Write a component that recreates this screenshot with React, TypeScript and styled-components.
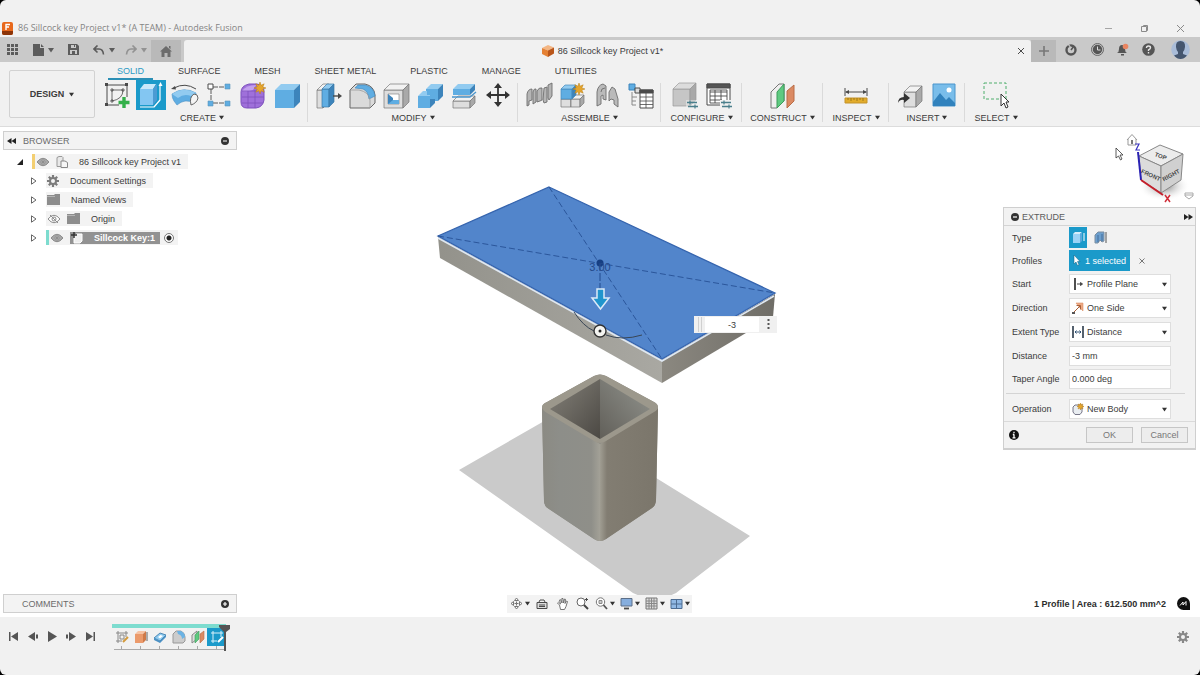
import React from 'react';
import styled, { createGlobalStyle, css } from 'styled-components';

const GlobalStyle = createGlobalStyle`
  *, *::before, *::after { box-sizing: border-box; }
  html, body { margin: 0; background: #000; }
  body { font: 9px/12px "Liberation Sans", Arial, sans-serif; color: #3c3c3c; }
  button, input, select { font: inherit; color: inherit; margin: 0; }
  button { border: 0; padding: 0; background: none; display: inline-flex; align-items: center; justify-content: center; }
  svg { display: block; flex: none; }
  h1, h2, ul { margin: 0; padding: 0; font: inherit; list-style: none; }
`;

const INK = '#4a4a4a';
const BLUE = '#5fade2';
const BLUE_DARK = '#3d84bb';
const BLUE_LIGHT = '#92cbf0';
const ACCENT = '#1b9aca';

/* ---------- frame ---------- */

const Window = styled.div`
  display: flex;
  flex-direction: column;
  min-height: 100vh;
  background: #f1f1f1;
  border-radius: 6px;
  overflow: hidden;
`;

const TitleBar = styled.header`
  display: flex;
  align-items: flex-end;
  justify-content: space-between;
  height: 37px;
  padding: 0 2px 2px 2px;
`;

const AppTitle = styled.h1`
  display: flex;
  align-items: center;
  gap: 5px;
  height: 14px;
  color: #858585;
  font-family: "Open Sans", sans-serif;
  font-size: 9px;
  white-space: nowrap;
`;

const WindowControls = styled.div`
  display: flex;
`;

const WindowButton = styled.button`
  width: 36px;
  height: 14px;
`;

const TabBar = styled.div`
  display: flex;
  height: 25px;
  background: #c9c9c9;
`;

const BarButton = styled.button<{ $w: number; $dark?: boolean; $muted?: boolean }>`
  width: ${p => p.$w}px;
  gap: 4px;
  opacity: ${p => (p.$muted ? 0.5 : 1)};
  ${p => p.$dark && css`
    margin-top: 3px;
    background: #b9b9b9;
  `}
`;

const QuickAccess = styled.div`
  display: flex;
  padding-right: 3px;
`;

const DocumentTab = styled.div`
  display: flex;
  flex: 1;
  align-items: center;
  margin-top: 3px;
  padding-left: 10px;
  background: #f1f1f1;
  border-radius: 3px 3px 0 0;
`;

const DocumentTitle = styled.span`
  display: flex;
  flex: 1;
  align-items: center;
  justify-content: center;
  gap: 4px;
  white-space: nowrap;
`;

const AccountTools = styled.div`
  display: flex;
`;

/* ---------- ribbon ---------- */

const Ribbon = styled.div`
  display: flex;
  height: 65px;
  border-bottom: 1px solid #dcdcdc;
`;

const DesignButton = styled.button`
  width: 86px;
  height: 48px;
  margin: 8px 1px 0 9px;
  gap: 5px;
  border: 1px solid #d2d2d2;
  border-radius: 2px;
  font-weight: bold;
`;

const RibbonBody = styled.div`
  flex: 1;
  min-width: 0;
`;

const RibbonTabs = styled.nav`
  display: flex;
  gap: 16px;
  height: 18px;
  padding-left: 12px;
`;

const RibbonTab = styled.button<{ $active?: boolean }>`
  padding: 1px 9px 0;
  border-bottom: 2px solid ${p => (p.$active ? '#2b8fb5' : 'transparent')};
  color: ${p => (p.$active ? '#2b9ac4' : 'inherit')};
  white-space: nowrap;
`;

const Groups = styled.div`
  display: flex;
`;

const Group = styled.section<{ $w: number; $last?: boolean }>`
  position: relative;
  display: flex;
  flex-direction: column;
  align-items: center;
  width: ${p => p.$w}px;
  ${p => !p.$last && css`
    &::after {
      content: '';
      position: absolute;
      top: 3px;
      right: 0;
      width: 1px;
      height: 39px;
      background: #dadada;
    }
  `}
`;

const ToolRow = styled.div`
  display: flex;
`;

const Tool = styled.button<{ $active?: boolean }>`
  width: 30px;
  height: 30px;
  margin: 0 2px;
  background: ${p => (p.$active ? ACCENT : 'none')};
`;

const GroupLabel = styled.button`
  height: 15px;
  gap: 3px;
  white-space: nowrap;
`;

/* ---------- canvas ---------- */

const Canvas = styled.main`
  position: relative;
  display: flex;
  flex: 1;
  flex-direction: column;
  justify-content: space-between;
  min-height: 490px;
  padding: 4px 4px 4px 3px;
  background: #fff;
`;

const Scene = styled.svg`
  position: absolute;
  inset: 0;
  width: 100%;
  height: 100%;
`;

const DockRow = styled.div`
  position: relative;
  display: flex;
  justify-content: space-between;
  align-items: flex-start;
`;

const FootRow = styled.div`
  position: relative;
  display: grid;
  grid-template-columns: 1fr auto 1fr;
  align-items: center;
`;

const Panel = styled.section`
  width: 234px;
`;

const PanelHeader = styled.div`
  display: flex;
  align-items: center;
  width: 234px;
  height: 19px;
  padding: 0 7px 0 3px;
  background: #f3f3f3;
  border: 1px solid #cfcfcf;
  color: #6b6b6b;
`;

const PanelTitle = styled.h2<{ $indent?: boolean }>`
  flex: 1;
  padding-left: ${p => (p.$indent ? 15 : 7)}px;
`;

const Tree = styled.ul`
  padding-top: 2px;
`;

const TreeItem = styled.li<{ $level: number }>`
  display: flex;
  align-items: center;
  height: 19px;
  gap: 5px;
  padding-left: ${p => 10 + p.$level * 14}px;
`;

const TreeToggle = styled.button`
  width: 14px;
  height: 14px;
`;

const Chip = styled.div<{ $mark?: string }>`
  display: flex;
  align-items: center;
  height: 15px;
  padding: 0 7px 0 1px;
  gap: 6px;
  background: #f3f3f3;
  white-space: nowrap;
  ${p => p.$mark && css`border-left: 3px solid ${p.$mark};`}
`;

const NodeName = styled.span<{ $selected?: boolean }>`
  display: flex;
  align-items: center;
  gap: 11px;
  ${p => p.$selected && css`
    height: 12px;
    padding: 0 5px 0 1px;
    background: #929292;
    color: #fff;
    font-weight: bold;
  `}
`;

const ActiveRadio = styled.input`
  appearance: none;
  width: 10px;
  height: 10px;
  margin: 0 -3px 0 -2px;
  border: 1px solid #777;
  border-radius: 50%;
  background: radial-gradient(circle, #222 0 2px, #fff 3px);
`;

const RightDock = styled.div`
  display: flex;
  flex-direction: column;
  align-items: flex-end;
  width: 193px;
`;

const Dialog = styled.form`
  width: 100%;
  background: #f2f2f2;
  border: 1px solid #cfcfcf;
  border-bottom-width: 2px;
`;

const DialogHeader = styled.div`
  display: flex;
  align-items: center;
  height: 18px;
  gap: 3px;
  padding: 0 2px 0 7px;
  border-bottom: 1px solid #d4d4d4;
  color: #5c5c5c;
  h2 { flex: 1; }
`;

const Fields = styled.div`
  padding: 0 24px 0 8px;
`;

const Field = styled.div<{ $tall?: boolean }>`
  display: flex;
  align-items: center;
  height: ${p => (p.$tall ? 24 : 23)}px;
  > label, > span { width: 57px; white-space: nowrap; }
`;

const Box = styled.div`
  display: flex;
  flex: 1;
  align-items: center;
  min-width: 0;
  height: 20px;
  gap: 3px;
  padding: 0 3px 0 2px;
  background: #fff;
  border: 1px solid #dedede;
`;

const Picker = styled.select`
  flex: 1;
  min-width: 0;
  padding: 0;
  border: 0;
  background: none;
  appearance: none;
`;

const TextBox = styled.input`
  flex: 1;
  min-width: 0;
  height: 20px;
  padding: 0 2px;
  background: #fff;
  border: 1px solid #dedede;
`;

const TypeButton = styled.button<{ $active?: boolean }>`
  width: 18px;
  height: 21px;
  margin-right: 4px;
  background: ${p => (p.$active ? ACCENT : 'none')};
`;

const SelectionButton = styled.button`
  width: 61px;
  height: 21px;
  gap: 4px;
  background: ${ACCENT};
  color: #fff;
  white-space: nowrap;
`;

const ClearButton = styled.button`
  width: 24px;
  height: 20px;
`;

const Divider = styled.hr`
  height: 1px;
  margin: 3px 10px 3px 2px;
  border: 0;
  background: #d4d4d4;
`;

const DialogFooter = styled.div`
  display: flex;
  align-items: center;
  height: 27px;
  gap: 8px;
  padding: 0 7px 0 5px;
  border-top: 1px solid #dadada;
`;

const InfoButton = styled.button`
  width: 10px;
  height: 16px;
  margin-right: auto;
`;

const DialogButton = styled.button`
  width: 47px;
  height: 16px;
  background: #ededed;
  border: 1px solid #c6c6c6;
  color: #777;
`;

const NavBar = styled.div`
  display: flex;
  align-items: center;
  height: 18px;
  background: #f3f3f3;
`;

const NavButton = styled.button<{ $menu?: boolean }>`
  width: ${p => (p.$menu ? 25 : 20)}px;
  height: 18px;
  gap: 2px;
`;

const Status = styled.div`
  display: flex;
  align-items: center;
  justify-content: flex-end;
  gap: 11px;
  padding-right: 6px;
  color: #2c2c2c;
  font-weight: bold;
`;

const FloatingInput = styled.div`
  position: absolute;
  left: calc(50% + 94px);
  top: 50%;
  display: flex;
  align-items: center;
  width: 83px;
  height: 17px;
  margin-top: -56px;
  padding: 1px 1px 1px 3px;
  gap: 1px;
  background: #f0f0f0;
  input {
    width: 54px;
    height: 15px;
    padding: 0;
    border: 0;
    background: #fff;
    text-align: center;
  }
`;

const MoreButton = styled.button`
  width: 16px;
  height: 15px;
`;

/* ---------- timeline ---------- */

const BottomBar = styled.footer`
  display: flex;
  align-items: flex-start;
  height: 58px;
  padding: 7px 8px 0 4px;
`;

const Playback = styled.div`
  display: flex;
  margin-right: 13px;
  padding-top: 3px;
`;

const PlayButton = styled.button`
  width: 19px;
  height: 19px;
`;

const Timeline = styled.div`
  position: relative;
  display: flex;
  height: 26px;
  border-top: 4px solid #7ddccf;
`;

const Feature = styled.button<{ $active?: boolean }>`
  width: 19px;
  height: 18px;
  background: ${p => (p.$active ? ACCENT : 'none')};
`;

const Ruler = styled.svg`
  position: absolute;
  left: 2px;
  bottom: 0;
`;

const Marker = styled.svg`
  position: absolute;
  right: -4px;
  top: -3px;
`;

const SettingsButton = styled.button`
  width: 18px;
  height: 26px;
  margin-left: auto;
`;

/* ---------- drawing helpers ---------- */

const Caret = ({ s = 5, c = '#333' }: { s?: number; c?: string }) => (
  <svg width={s} height={s} viewBox="0 0 6 6"><path d="M0 1h6L3 5.500z" fill={c} /></svg>
);

const Svg = ({ s = 30, h, children }: { s?: number; h?: number; children: React.ReactNode }) => (
  <svg width={s} height={h ?? s} viewBox={`0 0 ${s} ${h ?? s}`} fill="none" stroke={INK} strokeWidth="1" strokeLinejoin="round">{children}</svg>
);

type CubeProps = { x: number; y: number; w: number; h: number; d: number; front?: string; top?: string; side?: string; line?: string };
const Cube = ({ x, y, w, h, d, front = BLUE, top = BLUE_LIGHT, side = BLUE_DARK, line = 'none' }: CubeProps) => (
  <g stroke={line} strokeWidth=".7">
    <path fill={front} d={`M${x} ${y + d}h${w}v${h}h${-w}z`} />
    <path fill={top} d={`M${x} ${y + d}l${d} ${-d}h${w}l${-d} ${d}z`} />
    <path fill={side} d={`M${x + w} ${y + d}l${d} ${-d}v${h}l${-d} ${d}z`} />
  </g>
);
const GREY = { front: '#dedede', top: '#f2f2f2', side: '#a9a9a9', line: '#777' };

const burst = (cx: number, cy: number, r: number) =>
  Array.from({ length: 16 }, (_, i) => {
    const a = (i * Math.PI) / 8;
    const k = i % 2 ? r * 0.5 : r;
    return `${(cx + k * Math.sin(a)).toFixed(1)},${(cy - k * Math.cos(a)).toFixed(1)}`;
  }).join(' ');
const Burst = ({ x, y, r = 6 }: { x: number; y: number; r?: number }) => (
  <polygon points={burst(x, y, r)} fill="#e5a52c" stroke="#b97e15" strokeWidth=".5" />
);

const Gear = ({ s = 12, c = '#777' }: { s?: number; c?: string }) => (
  <svg width={s} height={s} viewBox="0 0 12 12">
    <g stroke={c} strokeWidth="2.200">
      <path d="M6 0v12M0 6h12M1.800 1.800l8.400 8.400M10.200 1.800l-8.400 8.400" />
    </g>
    <circle cx="6" cy="6" r="4" fill={c} />
    <circle cx="6" cy="6" r="2" fill="#f3f3f3" />
  </svg>
);

const Sync = () => (
  <g stroke="#4a7f8c" strokeWidth="1.500">
    <path d="M17 22.500h10M18 26.500h10" />
    <path d="M20 20.500v4M25 24.500v4" strokeWidth="1.200" />
  </g>
);

/* ---------- ribbon icons ---------- */

const icons: Record<string, React.ReactNode> = {
  sketch: <>
    <path d="M5 5h20M5 5v20M25 5v12M5 25h12" />
    <g fill={INK} stroke="none"><path d="M3 3h3v3H3zM23 3h3v3h-3zM3 23h3v3H3z" /></g>
    <path d="M10 10h11q0 9-11 11zM9 9h2v2H9zM20 9h2v2h-2zM9 20h2v2H9z" strokeWidth=".8" />
    <path d="M22 17v11M16.500 22.500h11" stroke="#34b04a" strokeWidth="3.400" />
  </>,
  extrude: <>
    <path d="M4 9l4-5h12l-3 5z" fill="#c9e8fa" stroke="none" />
    <path d="M4 9h13v16H4z" fill="#83c6f2" stroke="none" />
    <path d="M17 9l4-5v16l-4 5z" fill="#4c9bd3" stroke="none" />
    <path d="M4 27h14l6-7V6" stroke="#fff" strokeWidth="1.200" /><path d="M24.500 2l2 4h-4z" fill="#fff" stroke="none" />
  </>,
  revolve: <>
    <path d="M4 8Q15 2 26 9" /><path d="M1 9l4-3 1 3.500z" fill={INK} stroke="none" />
    <path d="M2 14Q14 6 26 13l-2 10q-9-5-17 2l-3-4q-2-3-2-7z" fill={BLUE} stroke="#4a90c4" strokeWidth=".6" />
    <path d="M2 14Q14 6 26 13l-5 3q-7-3-13 2z" fill={BLUE_LIGHT} stroke="none" />
    <path d="M21 25q-2-8 3-11 4 0 4 4-1 5-7 7z" fill="#f4f4f4" stroke="#666" />
  </>,
  pattern: <>
    <path d="M7 9v12M9 7h11M9 23h11" strokeDasharray="5 1" strokeWidth=".9" />
    <path d="M4 4h5v5H4z" fill="#fff" />
    <g fill={BLUE} stroke="#5b93b8" strokeWidth=".6"><path d="M21 4h5v5h-5zM4 21h5v5H4zM21 21h5v5h-5z" /></g>
  </>,
  form: <>
    <path d="M3 12q0-6 8-8h8q7 1 7 7v9q-1 7-8 8H9q-6 0-6-6z" fill="#9f70da" stroke="#7d51bd" />
    <path d="M4 11q4-6 14-6l-3 5q-5 2-11 1z" fill="#c3a0ee" stroke="none" />
    <path d="M4 17h22M10 11v17M17 10v18M4 23h21M4 11h14l7-4" stroke="#7d51bd" strokeWidth=".8" />
    <Burst x={22} y={8} r={6} />
  </>,
  box: <Cube x={3} y={4} w={19} h={18} d={6} />,
  press: <>
    <Cube x={4} y={4} w={6} h={18} d={6} {...GREY} />
    <Cube x={9} y={4} w={7} h={18} d={5} line="#3a78a8" />
    <path d="M20 16h6" strokeWidth="1.400" /><path d="M25 13l4 3-4 3z" fill={INK} stroke="none" />
  </>,
  fillet: <>
    <path d="M3 10l6-6h9q9 2 10 11v8l-5 5H3z" fill="#dadada" stroke="#666" />
    <path d="M11 5h7q9 2 10 11l-6 3q-1-8-6-10l-8-1z" fill={BLUE} stroke={BLUE_DARK} strokeWidth=".6" />
    <path d="M3 10h9q10 2 11 10v8" stroke="#999" strokeWidth=".8" />
  </>,
  shell: <>
    <Cube x={3} y={4} w={19} h={18} d={6} {...GREY} />
    <path d="M7 14h11v10H7z" fill="#fff" stroke="#777" strokeWidth=".6" />
    <path d="M7 14l5 4v6H7z" fill={BLUE_DARK} stroke="none" /><path d="M7 24l5-4h6v4z" fill={BLUE} stroke="none" />
  </>,
  combine: <>
    <Cube x={11} y={4} w={12} h={12} d={5} />
    <Cube x={3} y={11} w={12} h={12} d={5} />
    <path d="M12 10h10v9h-7v-4h-3z" fill={BLUE} stroke="none" />
  </>,
  split: <>
    <Cube x={4} y={4} w={17} h={6} d={5} />
    <Cube x={4} y={16} w={17} h={7} d={5} {...GREY} />
    <path d="M3 17h18l6-5" stroke="#4a95cc" strokeWidth="1.400" />
  </>,
  move: <g stroke="#333" strokeWidth="1.800">
    <path d="M15 6v18M6 15h18" />
    <path d="M15 3l4 5h-8zM15 27l-4-5h8zM3 15l5-4v8zM27 15l-5 4v-8z" fill="#333" stroke="none" />
  </g>,
  joint: <g fill="#b5b5b5" stroke="#6d6d6d" strokeWidth=".9">
    <path d="M3 26V14q1-5 5-5v11l-3 1v4zM9 24V12q1-4 3-3v13zM13 22V11q2-4 5-3v12l-2 1zM19 20l1-12 3-1v15l-3 1zM24 18V5l4-2v13l-3 4z" />
  </g>,
  newComponent: <>
    <Cube x={3} y={15} w={10} h={8} d={4} {...GREY} />
    <Cube x={13} y={15} w={9} h={8} d={4} {...GREY} />
    <Cube x={3} y={5} w={11} h={10} d={4} line="#4689bb" />
    <Burst x={21} y={9} r={6} />
  </>,
  asBuilt: <g fill="#bababa" stroke="#6d6d6d" strokeWidth=".9">
    <path d="M5 26V12q1-7 6-8l3 2v14l-3-1v-4l-2 1v8z" /><path d="M17 12l3-5 3 2 3 10v8l-4-3v-4l-3-1-2 2z" />
    <path d="M9 12q0-4 4-4" fill="none" />
  </g>,
  bom: <>
    <path d="M3 4h6v6H3z" fill={BLUE} stroke={BLUE_DARK} /><path d="M9 8h5v5H9z" fill="#ddd" />
    <path d="M6 12v13h4M6 17h5M6 21h4" stroke="#888" />
    <path d="M14 10h13v18H14z" fill="#fff" /><path d="M14 10h13v3H14z" fill={INK} />
    <path d="M14 17h13M14 21h13M14 24.500h13M20 13v15" strokeWidth=".8" />
  </>,
  configure: <>
    <Cube x={3} y={3} w={17} h={17} d={6} front="#c6c6c6" top="#dcdcdc" side="#a8a8a8" line="#9a9a9a" />
    <path d="M16 20h13v9H16z" fill="#f1f1f1" stroke="none" opacity=".5" /><Sync />
  </>,
  table: <>
    <path d="M3 4h23v21H3z" fill="#fff" /><path d="M3 4h23v4H3z" fill="#555" />
    <path d="M6 12h17M6 16h17M6 20h12M11 10v13M17 10v13M6 10h17v10M6 10v13h11" strokeWidth=".9" />
    <path d="M16 20h12v8H16z" fill="#f1f1f1" stroke="none" /><Sync />
  </>,
  plane: <>
    <path d="M3 12l8-8h5v17l-7 7H3z" fill="#efefef" stroke="#777" /><path d="M9 12l7-8v17l-7 7z" fill="#5fca81" stroke="#3d9b5a" />
    <path d="M19 11l7-6v16l-7 7z" fill="#db8a63" stroke="#b96d47" />
  </>,
  measure: <>
    <path d="M4 8v8M26 8v8M5 12h20" /><path d="M4 12l4-2v4zM26 12l-4-2v4z" fill={INK} stroke="none" />
    <path d="M4 18h22v5H4z" fill="#e2ac2b" stroke="#c4932a" /><path d="M7 18v2M10 18v3M13 18v2M16 18v3M19 18v2M22 18v3" stroke="#8f6c18" strokeWidth=".8" />
  </>,
  insert: <>
    <Cube x={9} y={6} w={12} h={15} d={6} {...GREY} />
    <path d="M3 23q0-6 6-6v-4l6 5-6 5v-3q-4-1-6 3z" fill="#333" stroke="none" />
  </>,
  image: <>
    <path d="M4 4h22v22H4z" fill="#79bdea" stroke="#4a95cc" />
    <path d="M4 22l7-9 6 7 3-3 6 6v3H4z" fill="#3182bd" stroke="none" /><circle cx="20" cy="10" r="2.500" fill="#fff" stroke="none" />
  </>,
  select: <>
    <path d="M3 3h22v16H3z" stroke="#4fae6c" strokeDasharray="3 2" />
    <path d="M20 14v12l3-3 2 5 2-1-2-5h3z" fill="#fff" stroke="#333" />
  </>,
};

const groups = [
  { name: 'CREATE', w: 212, tools: ['sketch', 'extrude', 'revolve', 'pattern', 'form', 'box'] },
  { name: 'MODIFY', w: 210, tools: ['press', 'fillet', 'shell', 'combine', 'split', 'move'] },
  { name: 'ASSEMBLE', w: 143, tools: ['joint', 'newComponent', 'asBuilt', 'bom'] },
  { name: 'CONFIGURE', w: 81, tools: ['configure', 'table'] },
  { name: 'CONSTRUCT', w: 81, tools: ['plane'] },
  { name: 'INSPECT', w: 66, tools: ['measure'] },
  { name: 'INSERT', w: 76, tools: ['insert', 'image'] },
  { name: 'SELECT', w: 62, tools: ['select'] },
];

const tabs = ['SOLID', 'SURFACE', 'MESH', 'SHEET METAL', 'PLASTIC', 'MANAGE', 'UTILITIES'];

/* ---------- small icons ---------- */

const Eye = ({ off }: { off?: boolean }) => (
  <svg width="14" height="10" viewBox="0 0 14 10" fill="none" stroke="#8c8c8c">
    <path d="M1 5q6-7.500 12 0-6 7.500-12 0z" fill={off ? '#fff' : '#a8a8a8'} /><circle cx="7" cy="5" r="2" fill={off ? 'none' : '#fff'} />
    {off ? <path d="M3 1l8 8" /> : <circle cx="7" cy="5" r="1" fill="#777" />}
  </svg>
);

const Folder = () => (
  <svg width="13" height="11" viewBox="0 0 13 11"><path d="M0 1h7l1-1h5v11H0z" fill="#8d8d8d" /><path d="M0 2.500h8" stroke="#b5b5b5" /></svg>
);

const RoundIcon = ({ plus }: { plus?: boolean }) => (
  <svg width="8" height="8" viewBox="0 0 8 8"><circle cx="4" cy="4" r="4" fill="#333" /><path d={plus ? 'M2 4h4M4 2v4' : 'M2 4h4'} stroke="#fff" strokeWidth="1.200" /></svg>
);

const Rewind = ({ flip }: { flip?: boolean }) => (
  <svg width="9" height="6" viewBox="0 0 9 6"><path d={flip ? 'M0 0l4.500 3L0 6zM4.500 0L9 3 4.500 6z' : 'M9 0L4.500 3 9 6zM4.500 0L0 3l4.500 3z'} fill="#222" /></svg>
);

const Pointer = () => (
  <svg width="8" height="11" viewBox="0 0 8 11"><path d="M1 0v9l2-2 1.500 3.500 1.500-.7L4.500 6.500H7z" fill="#fff" stroke="#0f5f80" strokeWidth=".5" /></svg>
);

const Expand = () => (
  <svg width="6" height="8" viewBox="0 0 6 8"><path d="M.5 .8L5 4 .5 7.200z" fill="#fff" stroke="#666" /></svg>
);

/* ---------- sections ---------- */

const Header = () => (
  <>
    <TitleBar>
      <AppTitle>
        <svg width="11" height="13" viewBox="0 0 11 13">
          <rect width="11" height="13" rx="2" fill="#e8681c" /><path d="M0 9h11v2q0 2-2 2H2q-2 0-2-2z" fill="#8c3408" />
          <path d="M4 8V2.500h4M4 5h3" stroke="#fff" strokeWidth="1.400" fill="none" />
        </svg>
        86 Sillcock key Project v1* (A TEAM) - Autodesk Fusion
      </AppTitle>
      <WindowControls>
        <WindowButton aria-label="Minimize"><Svg s={9}><path d="M1 4.500h7" stroke="#a5a5a5" /></Svg></WindowButton>
        <WindowButton aria-label="Restore"><Svg s={9}><path d="M1.500 2.500h5v5h-5zM3.500 2.500v-1h4v5h-1" stroke="#8a8a8a" /></Svg></WindowButton>
        <WindowButton aria-label="Close"><Svg s={9}><path d="M1 1l7 7M8 1L1 8" stroke="#8a8a8a" /></Svg></WindowButton>
      </WindowControls>
    </TitleBar>
    <TabBar>
      <QuickAccess>
        <BarButton $w={25} aria-label="Data panel">
          <svg width="11" height="11" viewBox="0 0 11 11" fill="#5c5c5c"><path d="M0 0h3v3H0zM4 0h3v3H4zM8 0h3v3H8zM0 4h3v3H0zM4 4h3v3H4zM8 4h3v3H8zM0 8h3v3H0zM4 8h3v3H4zM8 8h3v3H8z" /></svg>
        </BarButton>
        <BarButton $w={36} aria-label="File">
          <svg width="11" height="12" viewBox="0 0 11 12" fill="#5c5c5c"><path d="M0 0h7v4h4v8H0zM8 0l3 3H8z" /></svg><Caret s={6} c="#5c5c5c" />
        </BarButton>
        <BarButton $w={25} aria-label="Save">
          <svg width="11" height="11" viewBox="0 0 11 11"><path d="M0 0h9l2 2v9H0z" fill="#5c5c5c" /><path d="M3 1h5v3H3zM2 6h7v4H2z" fill="#c9c9c9" /><path d="M6 1h1v2H6zM4 7h3v3H4z" fill="#5c5c5c" /></svg>
        </BarButton>
        <BarButton $w={35} aria-label="Undo">
          <svg width="12" height="10" viewBox="0 0 12 10" fill="none" stroke="#5c5c5c" strokeWidth="1.600"><path d="M4.500 .5L1 4l3.500 3.500M1 4h5q4 0 4.500 5.500" /></svg><Caret s={6} c="#5c5c5c" />
        </BarButton>
        <BarButton $w={30} $muted aria-label="Redo">
          <svg width="12" height="10" viewBox="0 0 12 10" fill="none" stroke="#5c5c5c" strokeWidth="1.600"><path d="M7.500 .5L11 4 7.500 7.500M11 4H6Q2 4 1.500 9.500" /></svg><Caret s={6} c="#5c5c5c" />
        </BarButton>
        <BarButton $w={30} $dark aria-label="Home">
          <svg width="12" height="11" viewBox="0 0 12 11" fill="#6c6c6c"><path d="M6 0l6 5.500h-1.500V11H7.500V7h-3v4h-3V5.500H0zM9 0h1.500v3L9 2z" /></svg>
        </BarButton>
      </QuickAccess>
      <DocumentTab>
        <DocumentTitle>
          <svg width="12" height="12" viewBox="0 0 12 12"><path d="M0 3l6-3 6 2.500-6 3z" fill="#f3b684" /><path d="M0 3l6 2.500V12L0 9z" fill="#e58134" /><path d="M12 2.500L6 5.500V12l6-3.500z" fill="#b9561a" /></svg>
          86 Sillcock key Project v1*
        </DocumentTitle>
        <BarButton $w={20} aria-label="Close document"><Svg s={8}><path d="M1 1l6 6M7 1L1 7" /></Svg></BarButton>
      </DocumentTab>
      <AccountTools>
        <BarButton $w={25} $dark aria-label="New design"><Svg s={10}><path d="M5 0v10M0 5h10" stroke="#777" strokeWidth="1.600" /></Svg></BarButton>
        <BarButton $w={30} aria-label="Extensions"><Svg s={12}><circle cx="6" cy="6" r="4.500" stroke="#555" strokeWidth="2.400" /><path d="M6 6l3-4" stroke="#555" strokeWidth="1.600" /><path d="M3 0l3 4" stroke="#c9c9c9" strokeWidth="1.200" /></Svg></BarButton>
        <BarButton $w={22} aria-label="Job status"><Svg s={13}><circle cx="6.500" cy="6.500" r="6" stroke="#666" /><circle cx="6.500" cy="6.500" r="4.700" fill="#555" stroke="none" /><path d="M6.500 3.500v3.500h3" stroke="#ddd" /></Svg></BarButton>
        <BarButton $w={29} aria-label="Notifications"><Svg s={13}><path d="M1 10q2-1 2-4 0-4 3-4t3 4q0 3 2 4zM5 11h3v1.500H5z" fill="#555" stroke="none" /><circle cx="9.500" cy="3.500" r="2.800" fill="#e98561" stroke="none" /></Svg></BarButton>
        <BarButton $w={23} aria-label="Help"><Svg s={13}><circle cx="6.500" cy="6.500" r="6.300" fill="#555" stroke="none" /><path d="M4.500 5q0-2 2-2t2 1.700q0 1.300-2 2.200v1M6.500 9v1.500" stroke="#e6e6e6" strokeWidth="1.400" /></Svg></BarButton>
        <BarButton $w={40} aria-label="Account">
          <svg width="19" height="19" viewBox="0 0 19 19"><circle cx="9.500" cy="9.500" r="9.300" fill="#a9bcd8" /><path d="M9.500 1q5 0 4.500 6-.5 4-2 5v2l4 1.500q-3 3.500-6.500 3.500T3 15.500L7 14v-2Q5.500 11 5 7 4.500 1 9.500 1z" fill="#45566f" /></svg>
        </BarButton>
      </AccountTools>
    </TabBar>
  </>
);

const RibbonBar = () => (
  <Ribbon>
    <DesignButton>DESIGN <Caret /></DesignButton>
    <RibbonBody>
      <RibbonTabs>
        {tabs.map(t => <RibbonTab key={t} $active={t === 'SOLID'}>{t}</RibbonTab>)}
      </RibbonTabs>
      <Groups>
        {groups.map((g, i) => (
          <Group key={g.name} $w={g.w} $last={i === groups.length - 1}>
            <ToolRow>
              {g.tools.map(t => <Tool key={t} $active={t === 'extrude'} aria-label={t}><Svg>{icons[t]}</Svg></Tool>)}
            </ToolRow>
            <GroupLabel>{g.name} <Caret /></GroupLabel>
          </Group>
        ))}
      </Groups>
    </RibbonBody>
  </Ribbon>
);

const Model = () => (
  <Scene viewBox="0 127 1200 490" aria-label="Model view">
    <defs>
      <linearGradient id="left" x1="0" x2="1"><stop offset="0" stopColor="#8b8a83" /><stop offset=".3" stopColor="#8d8e89" /><stop offset=".85" stopColor="#8f8f89" /><stop offset="1" stopColor="#a3a197" /></linearGradient>
      <linearGradient id="right" x1="0" x2="1"><stop offset="0" stopColor="#a09d92" /><stop offset=".12" stopColor="#827d72" /><stop offset="1" stopColor="#7b766b" /></linearGradient>
      <linearGradient id="wallL" x1="0" x2="1" y1="0" y2="1"><stop offset="0" stopColor="#85827a" /><stop offset="1" stopColor="#4b4843" /></linearGradient>
      <linearGradient id="wallR" x1="0" x2="1" y1="1" y2="0"><stop offset="0" stopColor="#615f59" /><stop offset="1" stopColor="#93958f" /></linearGradient>
      <linearGradient id="slabL" x1="0" x2="1"><stop offset="0" stopColor="#93928b" /><stop offset="1" stopColor="#a9a8a2" /></linearGradient>
      <linearGradient id="slabR" x1="0" x2="1"><stop offset="0" stopColor="#8b8880" /><stop offset="1" stopColor="#6f6d67" /></linearGradient>
    </defs>
    <path d="M459 470L560 412 640 468 750 536 676 593Q655 604 633 593z" fill="#cacaca" />
    <path d="M542 408Q542 404 547 402L594 376Q600 373 606 376L654 402Q658 404 658 408L656 500Q656 505 652 508L606 539Q600 543 594 539L549 509Q544 506 544 501z" fill="#8d8b83" />
    <path d="M542 408L600 444V541Q597 541 594 539L549 509Q544 506 544 501z" fill="url(#left)" />
    <path d="M658 408L600 444V541Q603 541 606 539L652 508Q656 505 656 500z" fill="url(#right)" />
    <path d="M542 407Q542 404 547 402L594 376Q600 373 606 376L654 402Q658 404 658 407 658 410 654 412L606 441Q600 445 594 441L547 413Q542 410 542 407z" fill="#9c988c" />
    <path d="M600 379L550 409 600 439z" fill="url(#wallL)" /><path d="M600 379L650 409 600 439z" fill="url(#wallR)" />

    <path d="M438 237L662 360V383L440 258z" fill="url(#slabL)" /><path d="M775 294L662 360V383L773 317z" fill="url(#slabR)" />
    <path d="M438 238L662 361 774 296" fill="none" stroke="#dfe8f2" strokeWidth="1.600" />
    <path d="M549 187L775 293 662 359 438 236z" fill="#5285cb" stroke="#3564ae" strokeWidth="1.300" />
    <g stroke="#2b569b" strokeWidth="1" strokeDasharray="6 3"><path d="M438 236L775 293M549 187L662 359" /></g>
    <circle cx="600" cy="263" r="3.500" fill="#163f83" />
    <path d="M600 263v26" stroke="#214a8e" strokeDasharray="8 2" />
    <text x="600" y="271" textAnchor="middle" fontSize="11" fill="#24498a">3.00</text>
    <path d="M597 289h7v9h5l-8.500 11-8.500-11h5z" fill="#2095cd" stroke="#dceaf8" strokeWidth="1.500" />
    <path d="M574 312Q583 326 594 331M606 335Q622 341 642 335" fill="none" stroke="#394655" />
    <circle cx="600" cy="331" r="6" fill="#f4f4f1" stroke="#333" strokeWidth="1.400" /><circle cx="600" cy="331" r="1.500" fill="#222" />
  </Scene>
);

const Browser = () => (
  <Panel>
    <PanelHeader><Rewind /><PanelTitle>BROWSER</PanelTitle><RoundIcon /></PanelHeader>
    <Tree>
      <TreeItem $level={0}>
        <TreeToggle aria-label="Collapse"><svg width="6" height="6" viewBox="0 0 6 6"><path d="M6 0v6H0z" fill="#222" /></svg></TreeToggle>
        <Chip $mark="#f3cf72"><Eye />
          <NodeName>
            <Svg s={12}><path d="M1 1.500l2-1h3l1 1v9H1z" fill="#e8e8e8" stroke="#999" /><path d="M5 5h4l2.500 1.500v5H5z" fill="#f6f6f6" stroke="#888" /></Svg>
            86 Sillcock key Project v1
          </NodeName>
        </Chip>
      </TreeItem>
      <TreeItem $level={1}><TreeToggle aria-label="Expand"><Expand /></TreeToggle><Chip><NodeName><Gear c="#7c7c7c" />Document Settings</NodeName></Chip></TreeItem>
      <TreeItem $level={1}><TreeToggle aria-label="Expand"><Expand /></TreeToggle><Chip><NodeName><Folder />Named Views</NodeName></Chip></TreeItem>
      <TreeItem $level={1}><TreeToggle aria-label="Expand"><Expand /></TreeToggle><Chip><Eye off /><NodeName><Folder />Origin</NodeName></Chip></TreeItem>
      <TreeItem $level={1}>
        <TreeToggle aria-label="Expand"><Expand /></TreeToggle>
        <Chip $mark="#7ddccf"><Eye />
          <NodeName $selected>
            <Svg s={12}><path d="M3 4l2-2h6v7l-2 2H3z" fill="#eee" stroke="#fff" /><path d="M3 0v6M0 3h6" stroke="#333" strokeWidth="1.500" /></Svg>
            Sillcock Key:1
          </NodeName>
          <ActiveRadio type="radio" name="active" aria-label="Activate component" defaultChecked />
        </Chip>
      </TreeItem>
    </Tree>
  </Panel>
);

const ViewCube = () => (
  <svg width="86" height="76" viewBox="1110 131 86 76" fill="none">
    <defs>
      <radialGradient id="cubeShade"><stop offset="0" stopColor="#777" /><stop offset="1" stopColor="#fff" stopOpacity="0" /></radialGradient>
    </defs>
    <ellipse cx="1164" cy="186" rx="26" ry="15" fill="url(#cubeShade)" />
    <path d="M1127 140l5-5.500 5 5.500M1128 139v6h8v-6" stroke="#999" fill="#fff" /><path d="M1131 140h2v4h-2z" fill="#777" />
    <path d="M1139 156L1160 145 1183 154 1161 166z" fill="#ececec" stroke="#888" />
    <path d="M1139 156L1161 166V193L1141 180z" fill="#dcdcdc" stroke="#888" />
    <path d="M1183 154L1161 166V193L1181 180z" fill="#d0d0d0" stroke="#888" />
    <g fill="#444" fontSize="6" fontWeight="bold" textAnchor="middle">
      <text transform="translate(1160 158) rotate(20)">TOP</text>
      <text transform="translate(1150 177) rotate(24)">FRONT</text>
      <text transform="translate(1172 177) rotate(-28)">RIGHT</text>
    </g>
    <path d="M1138 152l3 28" stroke="#2a22b4" strokeWidth="2" /><path d="M1141 180l22 15" stroke="#c41f2b" strokeWidth="2" />
    <path d="M1135 144h4l-3 6h4" stroke="#3b34c4" strokeWidth="1.200" /><path d="M1165 195l5 7M1170 195l-5 7" stroke="#d02f3a" strokeWidth="1.500" />
    <path d="M1185 193h8v3l-4 3-4-3zM1185 195h8" stroke="#aaa" fill="#fff" />
    <path d="M1116 148v10l2.500-2 2 4 1.500-1-2-4h3z" fill="#fff" stroke="#333" strokeWidth=".8" />
  </svg>
);

const PickerField = ({ id, label, value, icon }: { id: string; label: string; value: string; icon: React.ReactNode }) => (
  <Field $tall>
    <label htmlFor={id}>{label}</label>
    <Box><Svg s={12}>{icon}</Svg><Picker id={id} defaultValue={value}><option>{value}</option></Picker><Caret /></Box>
  </Field>
);

const ExtrudeDialog = () => (
  <Dialog onSubmit={e => e.preventDefault()}>
    <DialogHeader><RoundIcon /><h2>EXTRUDE</h2><Rewind flip /></DialogHeader>
    <Fields>
      <Field>
        <span>Type</span>
        <TypeButton type="button" $active aria-label="Extrude"><Svg s={13}><Cube x={1} y={1} w={7} h={9} d={2} front="#9bd3f6" top="#d6eefb" side="#5aa9dc" /><path d="M12 2v8" stroke="#fff" /></Svg></TypeButton>
        <TypeButton type="button" aria-label="Thin extrude"><Svg s={13}><path d="M1 4l3-3h6v9l-2 1-2-2-2 3H1z" fill="#6c9fce" stroke="#7b8da0" /><path d="M4 4v7M8 3v7" stroke="#456f9c" /><path d="M12 1v11" stroke="#555" /></Svg></TypeButton>
      </Field>
      <Field>
        <span>Profiles</span>
        <SelectionButton type="button"><Pointer />1 selected</SelectionButton>
        <ClearButton type="button" aria-label="Clear selection"><Svg s={6}><path d="M.5 .5l5 5M5.500 .5l-5 5" stroke="#777" /></Svg></ClearButton>
      </Field>
      <PickerField id="start" label="Start" value="Profile Plane" icon={<><path d="M3 0v12" stroke="#222" strokeWidth="1.600" /><path d="M5 6h5" stroke="#444" /><path d="M8.500 4.500v3l2-1.500z" fill="#444" /></>} />
      <PickerField id="direction" label="Direction" value="One Side" icon={<><path d="M4 1l7 0v8L8 6z" fill="#eda983" stroke="#dc9068" strokeWidth=".6" /><path d="M1 11l7-7M4.500 3.500h4v4" stroke="#a85f38" /><path d="M0 10h3v2H0z" fill="#555" stroke="none" /></>} />
      <PickerField id="extent" label="Extent Type" value="Distance" icon={<><path d="M1 0v12M11 0v12" stroke="#2b3a4a" strokeWidth="1.600" /><path d="M3 6h6M4.500 4.500L3 6l1.500 1.500M7.500 4.500L9 6 7.500 7.500" stroke="#357" /></>} />
      <Field><label htmlFor="distance">Distance</label><TextBox id="distance" defaultValue="-3 mm" /></Field>
      <Field><label htmlFor="taper">Taper Angle</label><TextBox id="taper" defaultValue="0.000 deg" /></Field>
    </Fields>
    <Divider />
    <Fields>
      <PickerField id="operation" label="Operation" value="New Body" icon={<><path d="M1 4l2-2h7v7l-2 2.500H3L1 9z" fill="#e9edf1" stroke="#778" /><Burst x={8.500} y={3.500} r={3.500} /></>} />
    </Fields>
    <DialogFooter>
      <InfoButton type="button" aria-label="Info"><svg width="10" height="10" viewBox="0 0 10 10"><circle cx="5" cy="5" r="5" fill="#111" /><path d="M5 1.800v1.500M5 4.300v3.500M3.800 4.500H5M3.500 7.800h3" stroke="#fff" strokeWidth="1.300" /></svg></InfoButton>
      <DialogButton>OK</DialogButton>
      <DialogButton type="button">Cancel</DialogButton>
    </DialogFooter>
  </Dialog>
);

const Navigation = () => (
  <NavBar>
    <NavButton $menu aria-label="Orbit"><Svg s={13}><path d="M6.500 1l2 2.500h-4zM6.500 12l2-2.500h-4zM1 6.500L3.500 4.500v4zM12 6.500L9.500 4.500v4z" fill="#fff" stroke="#777" /><path d="M4.500 6.500h4M6.500 4.500v4" stroke="#777" /></Svg><Caret /></NavButton>
    <NavButton aria-label="Look at"><Svg s={12}><path d="M1 4.500h10v6H1z" fill="#ddd" /><path d="M3 4l1-2h4l1 2M3 7h6M3 8.500h6" /></Svg></NavButton>
    <NavButton aria-label="Pan"><Svg s={13}><path d="M3.500 8L1.500 6l1-.8L4.500 7l-1-4 1-.4L6 6l-.2-4.500h1.200L7.500 6l1-4 1 .3L9 6.500 10.500 4l1 .5-1.500 5-1.500 3h-4z" fill="#fff" stroke="#666" strokeWidth=".9" /></Svg></NavButton>
    <NavButton aria-label="Zoom"><Svg s={13}><circle cx="5" cy="5" r="4" fill="#fff" stroke="#666" /><path d="M8 8l4 4" stroke="#444" strokeWidth="2" /><path d="M10.500 1v3M9 2.500h3" /></Svg></NavButton>
    <NavButton $menu aria-label="Fit"><Svg s={13}><circle cx="5.500" cy="5" r="4.200" fill="#fff" stroke="#777" /><path d="M4 3.500h3v3H4z" fill="#ccc" stroke="#888" /><path d="M8.500 8l3.500 4" stroke="#555" strokeWidth="1.800" /></Svg><Caret /></NavButton>
    <NavButton $menu aria-label="Display settings"><Svg s={13}><path d="M1 1.500h11v7.500H1z" fill="#86aede" stroke="#5c6f88" /><path d="M4 11.500h5" strokeWidth="1.800" /></Svg><Caret /></NavButton>
    <NavButton $menu aria-label="Grid"><Svg s={13}><path d="M1 1h11v11H1z" fill="#ddd" stroke="#777" /><path d="M1 4h11M1 6.500h11M1 9h11M4 1v11M6.500 1v11M9 1v11" stroke="#888" /></Svg><Caret /></NavButton>
    <NavButton $menu aria-label="Viewports"><Svg s={13} h={12}><path d="M1 1.500h11v9H1z" fill="#90b8e4" stroke="#4d6c92" /><path d="M6.500 1.500v9M1 6h11" stroke="#4d6c92" /></Svg><Caret /></NavButton>
  </NavBar>
);

const playback: [string, string][] = [
  ['Go to start', 'M0 1h1.500v9H0zM9 1v9L2 5.500z'],
  ['Step back', 'M7 1v9L0 5.500zM8 3.500h2v4H8z'],
  ['Play', 'M1 0v11l9-5.500z'],
  ['Step forward', 'M3 1v9l7-4.500zM0 3.500h2v4H0z'],
  ['Go to end', 'M1 1v9l7-4.500zM8.500 1H10v9H8.500z'],
];

const features: [string, React.ReactNode][] = [
  ['Sketch 1', <><path d="M3 1v12M1 3h12M11 1v6M1 11h6" stroke="#888" /><path d="M5 5h4v4H5z" stroke="#888" /><path d="M8 12l5-5" stroke="#d39a3c" strokeWidth="2" /></>],
  ['Extrude 1', <><Cube x={1} y={1} w={8} h={9} d={3} front="#eb9a6b" top="#f6c3a4" side="#cf7a49" /><path d="M13 2v9" stroke="#666" /></>],
  ['Shell 1', <><path d="M1 8l6-5 6 2-6 6z" fill="#8ecbf0" stroke="#4e89b5" /><path d="M1 8l6 3v2l-6-3zM7 11l6-6v2l-6 6z" fill="#4a90c4" stroke="none" /><path d="M5 7l2.500-2 2.500 1-3 2.500z" fill="#fff" stroke="none" /></>],
  ['Fillet 1', <><path d="M1 4l3-3h5q4 2 4 6v4l-2 2H1z" fill="#ccc" stroke="#999" /><path d="M5 1h4q4 2 4 6l-3 2q0-4-4-5z" fill="#6bb3e4" stroke="none" /></>],
  ['Plane 1', <><path d="M1 5l5-4v8l-5 4z" fill="#dedede" stroke="#888" /><path d="M4 5l4-4v8l-4 4z" fill="#5fca81" stroke="#3d9b5a" strokeWidth=".6" /><path d="M9 4l4-3v8l-4 4z" fill="#db8a63" stroke="#b96d47" strokeWidth=".6" /></>],
  ['Sketch 2', <><path d="M3 1v12M1 3h12M11 1v6M1 11h6" stroke="#d9f1fa" /><path d="M8 12l5-5" stroke="#fff" strokeWidth="2" /></>],
];

export default function App() {
  return (
    <>
      <GlobalStyle />
      <Window>
        <Header />
        <RibbonBar />
        <Canvas>
          <Model />
          <FloatingInput>
            <svg width="7" height="15" viewBox="0 0 7 15"><path d="M1.500 0v15M4.500 0v15" stroke="#d0d0d0" /></svg>
            <input aria-label="Extrude distance" defaultValue="-3" />
            <MoreButton aria-label="More"><svg width="3" height="11" viewBox="0 0 3 11" fill="#555"><path d="M.5 0h2v2h-2zM.5 4h2v2h-2zM.5 8h2v2h-2z" /></svg></MoreButton>
          </FloatingInput>
          <DockRow>
            <Browser />
            <RightDock><ViewCube /><ExtrudeDialog /></RightDock>
          </DockRow>
          <FootRow>
            <PanelHeader><PanelTitle $indent>COMMENTS</PanelTitle><RoundIcon plus /></PanelHeader>
            <Navigation />
            <Status>
              1 Profile | Area : 612.500 mm^2
              <svg width="13" height="13" viewBox="0 0 13 13"><path d="M6.500 0A6.500 6.500 0 0 1 13 6.500V13H6.500a6.500 6.500 0 0 1 0-13z" fill="#111" /><path d="M3 8.500l3-3.500v3l3-3.500v4" stroke="#fff" fill="none" /></svg>
            </Status>
          </FootRow>
        </Canvas>
        <BottomBar>
          <Playback>
            {playback.map(([name, d]) => (
              <PlayButton key={name} aria-label={name}><svg width="10" height="11" viewBox="0 0 10 11"><path d={d} fill="#555" /></svg></PlayButton>
            ))}
          </Playback>
          <Timeline>
            {features.map(([name, icon], i) => (
              <Feature key={name} $active={i === 5} aria-label={name}><Svg s={14}>{icon}</Svg></Feature>
            ))}
            <Ruler width="110" height="4" viewBox="0 0 110 4"><path d="M0 3.500h110M7.500 0v4M26.500 0v4M45.500 0v4M64.500 0v4M83.500 0v4M102.500 0v4" stroke="#aaa" /></Ruler>
            <Marker width="11" height="26" viewBox="0 0 11 26"><path d="M0 0h11v4L7 7v19H5V7L0 2z" fill="#555" /></Marker>
          </Timeline>
          <SettingsButton aria-label="Timeline settings"><Gear c="#888" /></SettingsButton>
        </BottomBar>
      </Window>
    </>
  );
}
